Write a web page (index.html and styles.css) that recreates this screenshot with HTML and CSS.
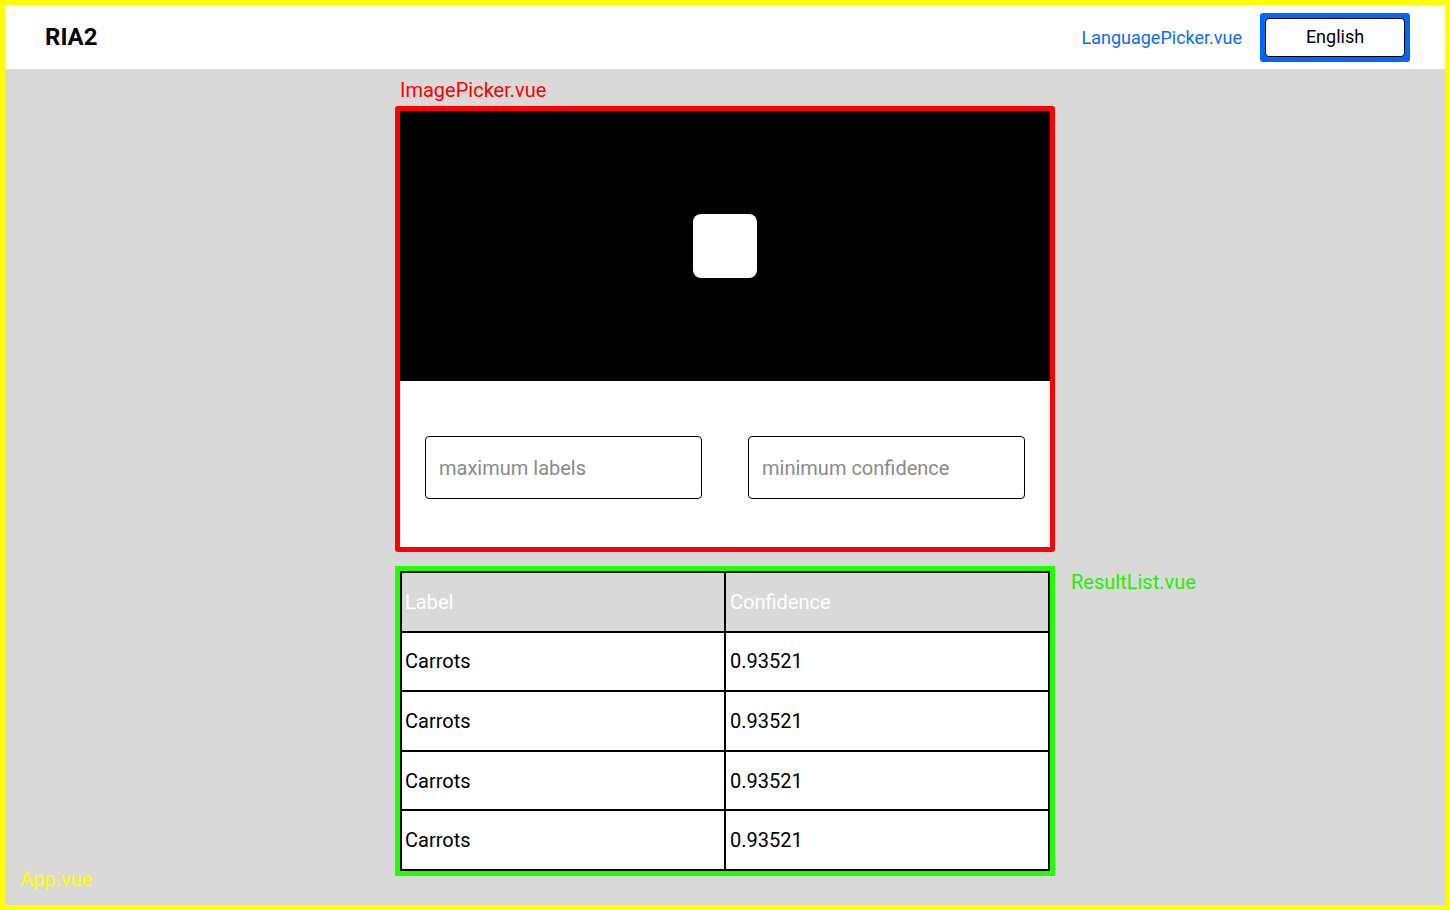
FILE: index.html
```html
<!DOCTYPE html>
<html lang="en">
<head>
<meta charset="utf-8">
<title>RIA2</title>
<link rel="stylesheet" href="styles.css">
</head>
<body>
<div class="app">
  <header class="topbar">
    <div class="brand">RIA2</div>
    <div class="lang">
      <span class="lang-name">LanguagePicker.vue</span>
      <div class="lang-frame"><button class="lang-btn">English</button></div>
    </div>
  </header>
  <main class="main">
    <div class="tag tag-red">ImagePicker.vue</div>
    <section class="picker">
      <div class="preview"><div class="preview-square"></div></div>
      <div class="fields">
        <input class="field" type="text" placeholder="maximum labels">
        <input class="field" type="text" placeholder="minimum confidence">
      </div>
    </section>
    <div class="spacer"></div>
    <section class="results">
      <div class="grid">
        <div class="cell head">Label</div>
        <div class="cell head">Confidence</div>
        <div class="cell">Carrots</div>
        <div class="cell">0.93521</div>
        <div class="cell">Carrots</div>
        <div class="cell">0.93521</div>
        <div class="cell">Carrots</div>
        <div class="cell">0.93521</div>
        <div class="cell">Carrots</div>
        <div class="cell">0.93521</div>
      </div>
    </section>
    <div class="tag tag-green">ResultList.vue</div>
  </main>
  <div class="tag tag-yellow">App.vue</div>
</div>
</body>
</html>
```
FILE: styles.css
```css
* { box-sizing: border-box; }
html, body { margin: 0; padding: 0; }
body {
  font-family: Roboto, "Liberation Sans", Arial, sans-serif;
  background: #d9d9d9;
}
.app {
  position: relative;
  width: 1450px;
  height: 910px;
  border: 5px solid #ffff00;
  background: #d9d9d9;
}
.topbar {
  height: 64px;
  background: #fff;
  display: flex;
  align-items: center;
  justify-content: space-between;
  padding: 0 35px 0 40px;
}
.brand {
  font-size: 24px;
  font-weight: 700;
  color: #000;
}
.lang {
  display: flex;
  align-items: center;
  gap: 18px;
}
.lang-name {
  font-size: 18px;
  color: #0a6cff;
}
.lang-frame {
  background: #0066ff;
  padding: 5px;
  border-radius: 3px;
}
.lang-btn {
  display: block;
  width: 140px;
  height: 39px;
  background: #fff;
  border: 1px solid #000;
  border-radius: 4px;
  font-family: Roboto, "Liberation Sans", Arial, sans-serif;
  font-size: 18px;
  color: #000;
  padding: 0 0 2px;
}
.main {
  display: grid;
  grid-template-columns: 1fr 660px 1fr;
  padding-top: 10px;
}
.tag {
  font-size: 20px;
  line-height: 23px;
}
.tag-red {
  grid-column: 2;
  grid-row: 1;
  color: #ff0000;
  padding-left: 5px;
  margin-bottom: 4px;
}
.picker {
  grid-column: 2;
  grid-row: 2;
  border: 5px solid #ff0000;
  border-radius: 3px;
  background: #fff;
}
.preview {
  height: 270px;
  background: #000;
  display: flex;
  align-items: center;
  justify-content: center;
}
.preview-square {
  width: 64px;
  height: 64px;
  background: #fff;
  border-radius: 8px;
}
.fields {
  display: flex;
  justify-content: space-between;
  padding: 55px 25px 48px;
}
.field {
  width: 277px;
  height: 63px;
  border: 1px solid #000;
  border-radius: 4px;
  padding: 0 13px;
  font-family: Roboto, "Liberation Sans", Arial, sans-serif;
  font-size: 20px;
  color: #000;
  background: #fff;
}
.field::placeholder { color: #8a8a8a; }
.spacer {
  grid-column: 2;
  grid-row: 3;
  height: 14px;
}
.results {
  grid-column: 2;
  grid-row: 4;
  border: 5px solid #22ff00;
}
.grid {
  display: grid;
  grid-template-columns: 1fr 1fr;
  grid-template-rows: repeat(5, 1fr);
  height: 300px;
  border: 1px solid #000;
}
.cell {
  border: 1px solid #000;
  display: flex;
  align-items: center;
  padding-left: 3px;
  font-size: 20px;
  color: #000;
  background: #fff;
}
.cell:nth-child(even) { padding-left: 4px; }
.cell.head {
  background: #d9d9d9;
  color: #fff;
}
.tag-green {
  grid-column: 3;
  grid-row: 4;
  color: #22ee00;
  padding: 5px 0 0 16px;
}
.tag-yellow {
  position: absolute;
  left: 15px;
  bottom: 14px;
  color: #ffff00;
}
```
